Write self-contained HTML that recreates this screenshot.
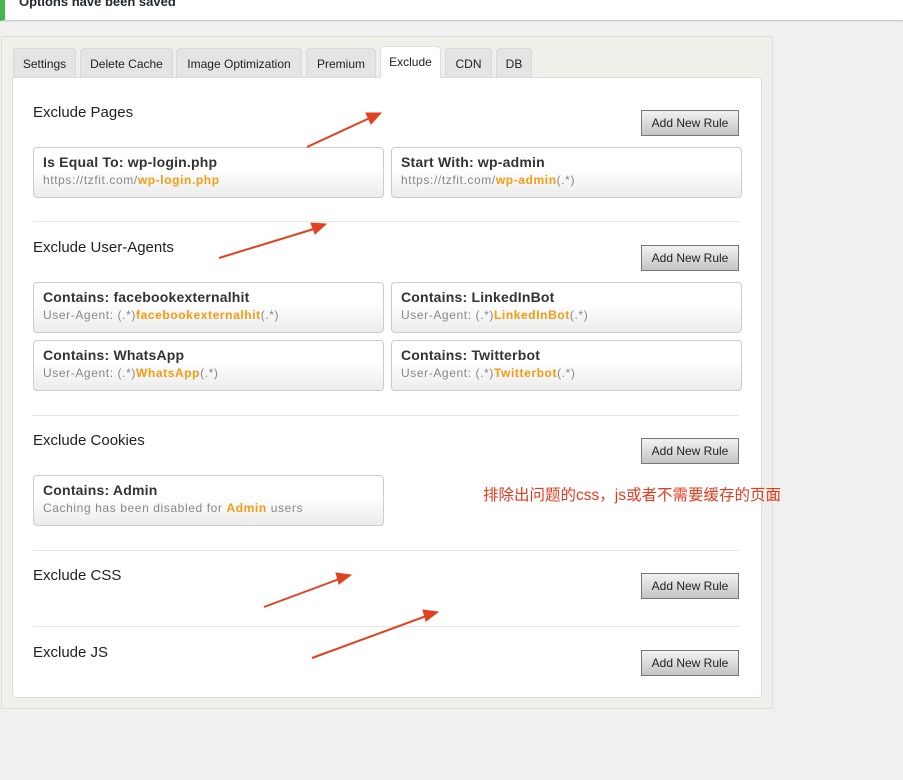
<!DOCTYPE html><html><head><meta charset="utf-8"><style>
*{box-sizing:border-box}body{margin:0;width:903px;height:780px;background:#f0f0f0;font-family:"Liberation Sans","DejaVu Sans",sans-serif;position:relative;overflow:hidden}
.note{position:absolute;left:0;top:0;width:903px;height:21px;background:#fff;border-left:5px solid #46b450;border-bottom:1px solid #ccc;box-shadow:0 1px 1px rgba(0,0,0,.05)}
.note b{position:absolute;left:14px;top:-6px;font-size:13px;color:#23282d}
.wrap{position:absolute;left:1px;top:36px;width:772px;height:673px;background:#f1efe9;border:1px solid #e0ded6}
.tab{position:absolute;top:11px;height:29px;background:#e4e4e4;border:1px solid #d8d8d8;border-bottom:none;border-radius:4px 4px 0 0;font-size:12px;color:#222;text-align:center;line-height:30px}
.tab.a{background:#fff;top:9px;height:32px;z-index:2;border-color:#ddd}
.panel{position:absolute;left:10px;top:40px;width:750px;height:621px;background:#fff;border:1px solid #dcdcdc;border-radius:0 4px 4px 4px}
h3{position:absolute;left:20px;margin:0;font-size:15px;font-weight:normal;color:#222}
.btn{position:absolute;left:628px;width:98px;height:26px;border:1px solid #777;background:linear-gradient(#f2f2f2,#c4c4c4);font-size:12px;color:#222;text-align:center;line-height:24px}
.card{position:absolute;width:351px;height:51px;border:1px solid #ccc;border-radius:4px;background:linear-gradient(#fff 40%,#ececec);padding:6px 9px}
.card .t{font-size:14px;font-weight:bold;color:#333;line-height:17px;letter-spacing:.2px}
.card .s{font-size:12px;color:#888;line-height:18px;letter-spacing:.6px}
.card .s b{color:#f39c12}
.sep{position:absolute;left:20px;width:706px;height:1px;background:#e4e4e4}
</style></head><body>
<div class="note"><b>Options have been saved</b></div>
<div class="wrap">
<div class="tab" style="left:11px;width:63px">Settings</div>
<div class="tab" style="left:78px;width:93px">Delete Cache</div>
<div class="tab" style="left:174px;width:126px">Image Optimization</div>
<div class="tab" style="left:304px;width:70px">Premium</div>
<div class="tab a" style="left:378px;width:61px">Exclude</div>
<div class="tab" style="left:443px;width:47px">CDN</div>
<div class="tab" style="left:494px;width:36px">DB</div>
<div class="panel">
<h3 style="top:26px">Exclude Pages</h3><div class="btn" style="top:32px">Add New Rule</div>
<div class="card" style="left:20px;top:69px"><div class="t">Is Equal To: wp-login.php</div><div class="s">https://tzfit.com/<b>wp-login.php</b></div></div>
<div class="card" style="left:378px;top:69px"><div class="t">Start With: wp-admin</div><div class="s">https://tzfit.com/<b>wp-admin</b>(.*)</div></div>
<div class="sep" style="top:143px"></div>
<h3 style="top:161px">Exclude User-Agents</h3><div class="btn" style="top:167px">Add New Rule</div>
<div class="card" style="left:20px;top:204px"><div class="t">Contains: facebookexternalhit</div><div class="s">User-Agent: (.*)<b>facebookexternalhit</b>(.*)</div></div>
<div class="card" style="left:378px;top:204px"><div class="t">Contains: LinkedInBot</div><div class="s">User-Agent: (.*)<b>LinkedInBot</b>(.*)</div></div>
<div class="card" style="left:20px;top:262px"><div class="t">Contains: WhatsApp</div><div class="s">User-Agent: (.*)<b>WhatsApp</b>(.*)</div></div>
<div class="card" style="left:378px;top:262px"><div class="t">Contains: Twitterbot</div><div class="s">User-Agent: (.*)<b>Twitterbot</b>(.*)</div></div>
<div class="sep" style="top:337px"></div>
<h3 style="top:354px">Exclude Cookies</h3><div class="btn" style="top:360px">Add New Rule</div>
<div class="card" style="left:20px;top:397px"><div class="t">Contains: Admin</div><div class="s">Caching has been disabled for <b>Admin</b> users</div></div>
<div class="sep" style="top:472px"></div>
<h3 style="top:489px">Exclude CSS</h3><div class="btn" style="top:495px">Add New Rule</div>
<div class="sep" style="top:548px"></div>
<h3 style="top:566px">Exclude JS</h3><div class="btn" style="top:572px">Add New Rule</div>
</div></div>
<div style="position:absolute;left:483px;top:483px;font-size:15.5px;color:#e53a1e;font-family:'Liberation Sans','Noto Sans CJK SC',sans-serif">排除出问题的css，js或者不需要缓存的页面</div>
<svg width="903" height="780" style="position:absolute;left:0;top:0" fill="#e0421f" stroke="#e0421f">
<g stroke-width="2"><line x1="307" y1="147" x2="372" y2="117"/><line x1="219" y1="258" x2="317" y2="228"/><line x1="264" y1="607" x2="342" y2="578"/><line x1="312" y1="658" x2="429" y2="615"/></g>
<polygon points="381,113 366,113 371,124"/><polygon points="326,224 311,223 315,234"/><polygon points="351,575 336,573 339,584"/><polygon points="438,612 423,610 426,621"/>
</svg>
</body></html>
